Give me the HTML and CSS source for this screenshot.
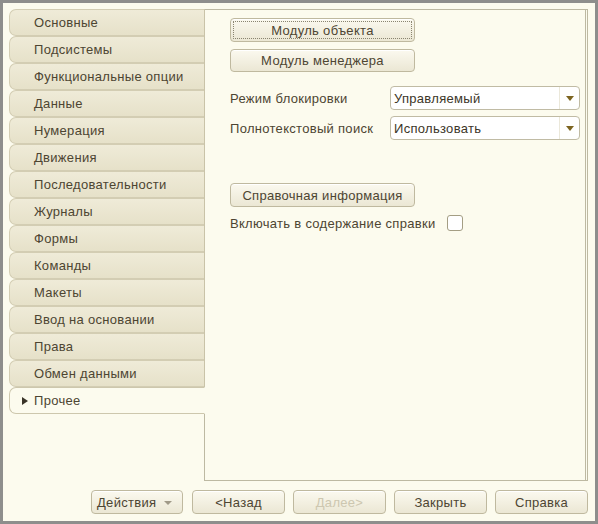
FILE: index.html
```html
<!DOCTYPE html>
<html lang="ru">
<head>
<meta charset="utf-8">
<title>Прочее</title>
<link rel="stylesheet" href="styles.css">
</head>
<body>
<div class="frame">
  <div class="main">
    <ul class="tabs">
      <li class="tab">Основные</li>
      <li class="tab">Подсистемы</li>
      <li class="tab">Функциональные опции</li>
      <li class="tab">Данные</li>
      <li class="tab">Нумерация</li>
      <li class="tab">Движения</li>
      <li class="tab">Последовательности</li>
      <li class="tab">Журналы</li>
      <li class="tab">Формы</li>
      <li class="tab">Команды</li>
      <li class="tab">Макеты</li>
      <li class="tab">Ввод на основании</li>
      <li class="tab">Права</li>
      <li class="tab">Обмен данными</li>
      <li class="tab tab-active"><span class="marker"></span>Прочее</li>
    </ul>
    <div class="panel">
      <button class="btn btn-wide btn-focus">Модуль объекта</button>
      <button class="btn btn-wide btn-second">Модуль менеджера</button>
      <div class="field field-first">
        <span class="label">Режим блокировки</span>
        <div class="select"><span class="select-text">Управляемый</span><span class="select-arrow"></span></div>
      </div>
      <div class="field">
        <span class="label">Полнотекстовый поиск</span>
        <div class="select"><span class="select-text">Использовать</span><span class="select-arrow"></span></div>
      </div>
      <button class="btn btn-wide btn-help">Справочная информация</button>
      <div class="check-row">
        <span class="label-inline">Включать в содержание справки</span>
        <span class="checkbox"></span>
      </div>
    </div>
  </div>
  <div class="footer">
    <button class="btn btn-foot btn-actions">Действия<span class="small-arrow"></span></button>
    <button class="btn btn-foot">&lt;Назад</button>
    <button class="btn btn-foot btn-disabled">Далее&gt;</button>
    <button class="btn btn-foot">Закрыть</button>
    <button class="btn btn-foot">Справка</button>
  </div>
</div>
</body>
</html>
```

FILE: styles.css
```css
* { box-sizing: border-box; }
html, body {
  margin: 0;
  padding: 0;
  background: #fcfbee;
}
body {
  font-family: "Liberation Sans", Arial, sans-serif;
  font-size: 13px;
  letter-spacing: 0.3px;
  color: #4d4532;
}
.frame {
  width: 598px;
  height: 524px;
  border: 3px solid #8e8e8c;
  background: #fcfbee;
  display: flex;
  flex-direction: column;
  padding: 6px 7px 0 6px;
}
.main {
  display: flex;
  height: 472px;
}
.tabs {
  list-style: none;
  margin: 0;
  padding: 0;
  width: 195px;
  flex: none;
}
.tab {
  height: 27px;
  line-height: 26px;
  padding-left: 24px;
  background: linear-gradient(#efebd8, #e6e1c9);
  border: 1px solid #d3cdb3;
  border-right-color: #c9c3a8;
  border-radius: 7px 0 0 7px;
  margin-right: -1px;
  position: relative;
  white-space: nowrap;
  color: #4d4532;
}
.tab-active {
  background: #fcfbee;
  border-color: #cdc7ad;
  border-right-color: #fcfbee;
  z-index: 2;
}
.marker {
  position: absolute;
  left: 12px;
  top: 9px;
  width: 0;
  height: 0;
  border-left: 6px solid #3a3428;
  border-top: 4.5px solid transparent;
  border-bottom: 4.5px solid transparent;
}
.panel {
  flex: 1;
  border: 1px solid #bdb9a2;
  border-right: 3px double #bdb9a2;
  background: #fcfbee;
  padding: 8px 0 0 25px;
  display: flex;
  flex-direction: column;
  align-items: flex-start;
}
.btn {
  font-family: "Liberation Sans", Arial, sans-serif;
  font-size: 13px;
  letter-spacing: 0.3px;
  color: #4d4532;
  background: linear-gradient(#fbf9ef, #ebe7d4);
  border: 1px solid #bfb99f;
  border-radius: 4px;
  height: 24px;
  padding: 0;
  box-shadow: inset 0 1px 0 #ffffff;
}
.btn-wide {
  width: 185px;
}
.btn-focus {
  outline: 1px dotted #8a8470;
  outline-offset: -4px;
}
.btn-second {
  margin-top: 7px;
  height: 23px;
}
.field {
  display: flex;
  align-items: center;
  margin-top: 6px;
}
.field-first {
  margin-top: 14px;
}
.label {
  width: 160px;
  white-space: nowrap;
}
.select {
  width: 190px;
  height: 24px;
  background: #ffffff;
  border: 1px solid #c0bba4;
  border-radius: 4px;
  display: flex;
  align-items: center;
}
.select-text {
  flex: 1;
  padding-left: 3px;
  color: #3c3628;
}
.select-arrow {
  width: 20px;
  height: 22px;
  border-left: 1px solid #ebe8da;
  position: relative;
}
.select-arrow::after {
  content: "";
  position: absolute;
  left: 6px;
  top: 9px;
  border-top: 5px solid #7c6420;
  border-left: 4px solid transparent;
  border-right: 4px solid transparent;
}
.btn-help {
  margin-top: 43px;
}
.check-row {
  display: flex;
  align-items: center;
  margin-top: 8px;
}
.label-inline {
  white-space: nowrap;
}
.checkbox {
  width: 16px;
  height: 16px;
  margin-left: 11px;
  background: #ffffff;
  border: 1px solid #a49e84;
  border-radius: 3px;
}
.footer {
  display: flex;
  justify-content: flex-end;
  gap: 8px;
  margin-top: 9px;
}
.btn-foot {
  width: 93px;
  height: 24px;
}
.btn-actions {
  text-align: left;
  padding-left: 5px;
  position: relative;
  width: 92px;
  margin-right: 1px;
}
.small-arrow {
  position: absolute;
  right: 10px;
  top: 10px;
  border-top: 4px solid #a09a88;
  border-left: 4px solid transparent;
  border-right: 4px solid transparent;
}
.btn-disabled {
  color: #cdc7b0;
}
```
